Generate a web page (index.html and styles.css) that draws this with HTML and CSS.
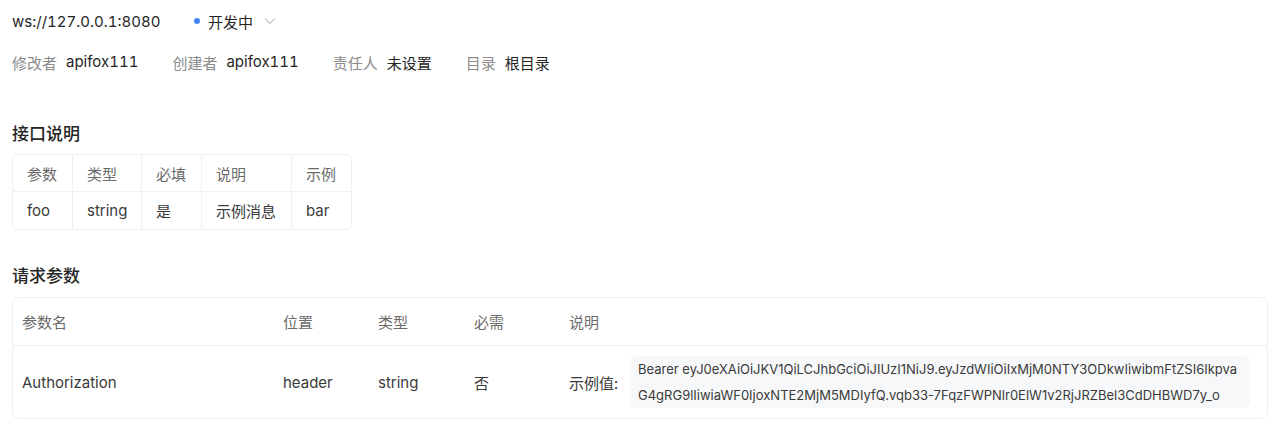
FILE: index.html
```html
<!DOCTYPE html>
<html lang="zh-CN">
<head>
<meta charset="utf-8">
<link rel="stylesheet" href="styles.css">
</head>
<body>
<div class="page">
  <div class="top">
    <span class="url">ws://127.0.0.1:8080</span>
    <span class="status">
      <span class="dot"></span>
      <span class="status-text">开发中</span>
      <svg class="chev" width="12" height="8" viewBox="0 0 12 8"><path d="M1 1.5 L6 6.5 L11 1.5" fill="none" stroke="#c4c7cc" stroke-width="1.1"/></svg>
    </span>
  </div>
  <div class="meta">
    <span class="meta-item"><span class="label">修改者</span><span class="value">apifox111</span></span>
    <span class="meta-item"><span class="label">创建者</span><span class="value">apifox111</span></span>
    <span class="meta-item"><span class="label">责任人</span><span class="value">未设置</span></span>
    <span class="meta-item"><span class="label">目录</span><span class="value">根目录</span></span>
  </div>

  <h2 class="section-title first">接口说明</h2>
  <table class="desc">
    <colgroup><col class="c1"><col class="c2"><col class="c3"><col class="c4"><col class="c5"></colgroup>
    <tr class="head"><td>参数</td><td>类型</td><td>必填</td><td>说明</td><td>示例</td></tr>
    <tr><td>foo</td><td>string</td><td>是</td><td>示例消息</td><td>bar</td></tr>
  </table>

  <h2 class="section-title second">请求参数</h2>
  <div class="params">
    <div class="prow phead">
      <div class="pc name">参数名</div>
      <div class="pc pos">位置</div>
      <div class="pc type">类型</div>
      <div class="pc req">必需</div>
      <div class="pc note">说明</div>
    </div>
    <div class="prow pbody">
      <div class="pc name">Authorization</div>
      <div class="pc pos">header</div>
      <div class="pc type">string</div>
      <div class="pc req">否</div>
      <div class="pc note">
        <span class="ex-label">示例值:</span>
        <div class="code"><span class="code-line">Bearer eyJ0eXAiOiJKV1QiLCJhbGciOiJIUzI1NiJ9.eyJzdWIiOiIxMjM0NTY3ODkwIiwibmFtZSI6Ikpva</span><span class="code-line">G4gRG9lIiwiaWF0IjoxNTE2MjM5MDIyfQ.vqb33-7FqzFWPNlr0ElW1v2RjJRZBel3CdDHBWD7y_o</span></div>
      </div>
    </div>
  </div>
</div>
</body>
</html>
```

FILE: styles.css
```css
* { box-sizing: border-box; }
html, body { margin: 0; padding: 0; background: #ffffff; }
body {
  font-family: Inter, "Noto Sans CJK SC", sans-serif;
  font-size: 15px;
  color: #262626;
  font-variant-numeric: tabular-nums;
}
.page { padding: 0 12px; }

.top {
  display: flex;
  align-items: center;
  height: 42px;
}
.url { color: #262626; width: 182px; }
.status { display: flex; align-items: center; }
.dot {
  width: 6px; height: 6px; border-radius: 50%;
  background: #3d85f5;
  margin-right: 8px;
}
.status-text { color: #262626; margin-right: 11px; }
.chev { display: block; }

.meta {
  display: flex;
  align-items: center;
  height: 40px;
  gap: 34px;
}
.meta-item { display: flex; gap: 9px; }
.label { color: #8c8c8c; }
.value { color: #262626; }

.section-title {
  font-size: 17px;
  font-weight: 500;
  margin: 0;
  height: 24px;
  line-height: 24px;
  color: #262626;
}
.section-title.first { margin-top: 40px; margin-bottom: 8px; }
.section-title.second { margin-top: 34px; margin-bottom: 9px; }

.desc {
  border-collapse: separate;
  border-spacing: 0;
  border: 1px solid #eff0f2;
  border-radius: 6px;
  table-layout: fixed;
  width: 340px;
}
.desc .c1 { width: 60px; }
.desc .c2 { width: 69px; }
.desc .c3 { width: 60px; }
.desc .c4 { width: 90px; }
.desc .c5 { width: 59px; }
.desc td {
  height: 37px;
  padding: 0 0 0 14px;
  border-right: 1px solid #eff0f2;
  border-bottom: 1px solid #eff0f2;
  white-space: nowrap;
  color: #3a3a3a;
}
.desc td:last-child { border-right: none; }
.desc tr:last-child td { border-bottom: none; }
.desc .head td { color: #6b6b6b; }

.params {
  border: 1px solid #eff0f2;
  border-radius: 6px;
}
.prow { display: flex; align-items: center; }
.phead { height: 48px; border-bottom: 1px solid #eff0f2; color: #6b6b6b; }
.pbody { height: 72px; color: #3a3a3a; }
.pc { padding-left: 9px; flex: none; }
.name { width: 261px; }
.pos { width: 95px; }
.type { width: 96px; }
.req { width: 95px; }
.note { flex: 1; display: flex; align-items: center; }
.ex-label { width: 61px; flex: none; }
.code {
  background: #f7f8fa;
  border-radius: 6px;
  padding: 0 8px;
  height: 52px;
  width: 620px;
  font-size: 13px;
  line-height: 26px;
  color: #3a3a3a;
  font-variant-numeric: normal;
}
.code-line { display: block; white-space: nowrap; }
```
